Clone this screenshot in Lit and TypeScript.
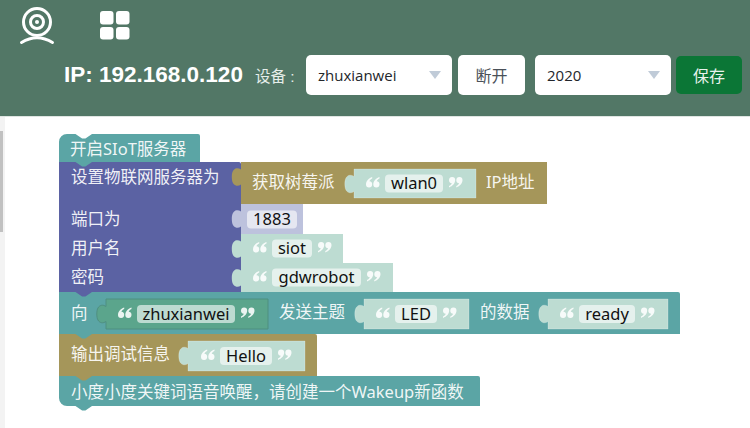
import { LitElement, html, css, svg } from "lit";
import { customElement } from "lit/decorators.js";

const tabUp = `c -1.500,1 -3,1.500 -4.500,1.200 c -3,-0.600 -4.700,-3.500 -4.700,-8.700 c 0,-5.200 1.700,-8.100 4.700,-8.700 c 1.500,-0.300 3,0.200 4.500,1.200`;
const TEAL = "#5ba5a5";
const OLIVE = "#a5965a";
const PURPLE = "#5b62a3";
const LAV = "#bdc2dd";
const MINT = "#bddcd2";
const GREEN = "#5ba58c";

/* A value block: flat rectangle with a puzzle tab on its left edge. */
function valuePath(x: number, y: number, w: number, h: number) {
  return `M ${x},${y} H ${x + w} V ${y + h} H ${x} V ${y + 22.500} ${tabUp} Z`;
}

/* A statement block: optional hat notch on top, tab on the bottom. */
function stmtPath(x: number, y: number, w: number, h: number, opts: { rt?: boolean; rb?: boolean } = {}) {
  const r = 8;
  const top = opts.rt ? `M ${x},${y + r} A ${r},${r} 0 0 1 ${x + r},${y} H ${x + 16.5} l 6.6,4.4 3.3,0 6.6,-4.4` : `M ${x},${y}`;
  const bottom = opts.rb
    ? `H ${x + 33} l -6.6,4.4 -3.3,0 -6.6,-4.4 H ${x + r} A ${r},${r} 0 0 1 ${x},${y + h - r}`
    : `H ${x + 33} l -6.6,4.4 -3.3,0 -6.6,-4.4 H ${x}`;
  return `${top} H ${x + w - 2} Q ${x + w},${y} ${x + w},${y + 2} V ${y + h} ${bottom} Z`;
}

const open66 = "M6.200,0 C2.500,1.200 0,4.200 0,7.400 A3.100,3.100 0 1 0 3.400,4.300 C3.700,3.300 4.800,2.200 6.200,1.500 Z";

function quote(x: number, y: number, closing: boolean) {
  const t = closing ? `translate(${x + 13.500},${y + 10.500}) rotate(180)` : `translate(${x},${y})`;
  return svg`<g transform=${t} fill="#fff" fill-opacity="0.88">
    <path d=${open66}></path><path d=${open66} transform="translate(7.300,0)"></path></g>`;
}

interface Str { x: number; y: number; w: number; h: number; fill: string; stroke?: string; pillX: number; pillW: number; label: string; }

function stringBlock(b: Str) {
  const cy = b.y + b.h / 2;
  return svg`
    <path d=${valuePath(b.x, b.y, b.w, b.h)} fill=${b.fill} stroke=${b.stroke ?? "none"} stroke-width="1"></path>
    ${quote(b.pillX - 19, cy - 6.500, false)}
    <rect x=${b.pillX} y=${cy - 9} width=${b.pillW} height="18" rx="4" fill="#fff" fill-opacity="0.6"></rect>
    <text class="val" x=${b.pillX + b.pillW / 2} y=${cy + 5.5} text-anchor="middle">${b.label}</text>
    ${quote(b.pillX + b.pillW + 6, cy - 6.500, true)}`;
}

const BLOCKS_W = 745;
const BLOCKS_H = 311;
const OFFSET_Y = 117;
const SLOT_EDGE = "rgba(255,255,255,0.22)";

@customElement("app-root")
export class AppRoot extends LitElement {
  static styles = css`
    :host { display: block; width: 750px; height: 428px; overflow: hidden; background: #fff; font-family: "Liberation Sans", "Noto Sans CJK SC", sans-serif; }
    .header { height: 116px; background: #527766; border-bottom: 1px solid #dfe5e2; display: flex; flex-direction: column; }
    .icons { display: flex; align-items: flex-start; gap: 44px; padding: 7px 0 0 19px; height: 55px; box-sizing: border-box; }
    .controls { display: flex; align-items: center; height: 40px; padding-left: 64px; }
    .ip { color: #fff; font-size: 22.500px; font-weight: 700; width: 191px; white-space: nowrap; }
    .label { color: #e6eeea; font-size: 15.500px; width: 51px; white-space: nowrap; }
    .box { box-sizing: border-box; height: 40px; background: #fff; border-radius: 5px; display: flex; align-items: center; color: #23262b; font-size: 15px; font-family: "Open Sans", "Noto Sans CJK SC", sans-serif; }
    .select { padding: 0 11px 0 12px; justify-content: space-between; }
    .sel1 { width: 146px; margin-right: 6px; }
    .sel2 { width: 136px; margin-right: 5px; }
    .caret { width: 0; height: 0; border-left: 6.5px solid transparent; border-right: 6.5px solid transparent; border-top: 8px solid #c0cbd8; }
    .btn { width: 67px; margin-right: 10px; justify-content: center; color: #4a5058; font-size: 16px; }
    .save { width: 66px; height: 38px; background: #0b7636; color: #e8f3ec; border-radius: 5px; display: flex; align-items: center; justify-content: center; font-size: 16px; }
    .main { display: flex; height: 311px; }
    .track { width: 5px; background: #f3f3f3; padding-top: 14px; box-sizing: border-box; flex: none; }
    .thumb { width: 3px; height: 101px; background: #c1c1c1; }
    svg.canvas { display: block; flex: none; }
    text { font-family: "Noto Sans", "Noto Sans CJK SC", sans-serif; font-size: 16.500px; }
    text.lbl { fill: #fff; fill-opacity: 0.92; }
    text.val { fill: #111; }
  `;

  private canvas() {
    const X = -5; // svg origin is 5px right of the window edge
    const Y = -OFFSET_Y;
    const t = (x: number, y: number, s: string) => svg`<text class="lbl" x=${x} y=${y}>${s}</text>`;
    return svg`<svg class="canvas" width=${BLOCKS_W} height=${BLOCKS_H} viewBox="${-X} ${-Y} ${BLOCKS_W} ${BLOCKS_H}">
      <path d=${stmtPath(59, 376, 421, 30, { rb: true })} fill=${TEAL}></path>
      ${t(71, 398, "小度小度关键词语音唤醒，请创建一个Wakeup新函数")}

      <path d=${stmtPath(59, 334, 258, 42)} fill=${OLIVE}></path>
      ${t(71, 360, "输出调试信息")}
      ${stringBlock({ x: 188, y: 341, w: 117, h: 30, fill: MINT, stroke: SLOT_EDGE, pillX: 220, pillW: 52, label: "Hello" })}

      <path d=${stmtPath(59, 292, 621, 42)} fill=${TEAL}></path>
      ${t(71, 319, "向")}
      ${stringBlock({ x: 106, y: 299, w: 162, h: 30, fill: GREEN, stroke: "#4f8f80", pillX: 137, pillW: 98, label: "zhuxianwei" })}
      ${t(279, 318, "发送主题")}
      ${stringBlock({ x: 364, y: 299, w: 105, h: 30, fill: MINT, stroke: SLOT_EDGE, pillX: 395, pillW: 42, label: "LED" })}
      ${t(480, 318, "的数据")}
      ${stringBlock({ x: 548, y: 299, w: 120, h: 30, fill: MINT, stroke: SLOT_EDGE, pillX: 579, pillW: 56, label: "ready" })}

      <path d=${stmtPath(59, 162, 182, 130)} fill=${PURPLE}></path>
      ${t(71, 183, "设置物联网服务器为")}
      ${t(71, 225, "端口为")}
      ${t(71, 254, "用户名")}
      ${t(71, 283, "密码")}

      <path d=${valuePath(241, 162, 306, 42)} fill=${OLIVE}></path>
      ${t(252, 188, "获取树莓派")}
      ${stringBlock({ x: 354, y: 169, w: 122, h: 29, fill: MINT, stroke: SLOT_EDGE, pillX: 385, pillW: 58, label: "wlan0" })}
      ${t(486, 188, "IP地址")}

      <path d=${valuePath(241, 204, 62, 30)} fill=${LAV}></path>
      <rect x="247" y="210.500" width="50" height="18" rx="4" fill="#fff" fill-opacity="0.6"></rect>
      <text class="val" x="272" y="225" text-anchor="middle">1883</text>

      ${stringBlock({ x: 241, y: 234, w: 102, h: 29, fill: MINT, pillX: 272, pillW: 40, label: "siot" })}
      ${stringBlock({ x: 241, y: 263, w: 152, h: 29, fill: MINT, pillX: 272, pillW: 89, label: "gdwrobot" })}

      <path d=${stmtPath(59, 134, 141, 28, { rt: true })} fill=${TEAL}></path>
      ${t(70, 155, "开启SIoT服务器")}
    </svg>`;
  }

  render() {
    return html`
      <div class="header">
        <div class="icons">
          <svg width="37" height="38" viewBox="0 0 37 38" fill="none" stroke="#fff" stroke-linecap="round">
            <path d="M2.500,35.500 Q18,26 33.500,35.500" stroke-width="3"></path>
            <circle cx="18" cy="15" r="13.500" stroke-width="3"></circle>
            <circle cx="18" cy="15" r="6.500" stroke-width="3"></circle>
            <circle cx="18" cy="15" r="2" fill="#fff" stroke="none"></circle>
          </svg>
          <svg width="30" height="30" viewBox="0 0 30 30" fill="#fff" style="margin-top:4px">
            <rect x="0" y="0" width="13.500" height="13.500" rx="3"></rect>
            <rect x="16" y="0" width="13.500" height="13.500" rx="3"></rect>
            <rect x="0" y="16" width="13.500" height="12.500" rx="3"></rect>
            <rect x="16" y="16" width="13.500" height="12.500" rx="3"></rect>
          </svg>
        </div>
        <div class="controls">
          <div class="ip">IP: 192.168.0.120</div>
          <div class="label">设备 :</div>
          <div class="box select sel1"><span>zhuxianwei</span><span class="caret"></span></div>
          <div class="box btn">断开</div>
          <div class="box select sel2"><span>2020</span><span class="caret"></span></div>
          <div class="save">保存</div>
        </div>
      </div>
      <div class="main">
        <div class="track"><div class="thumb"></div></div>
        ${this.canvas()}
      </div>
    `;
  }
}
